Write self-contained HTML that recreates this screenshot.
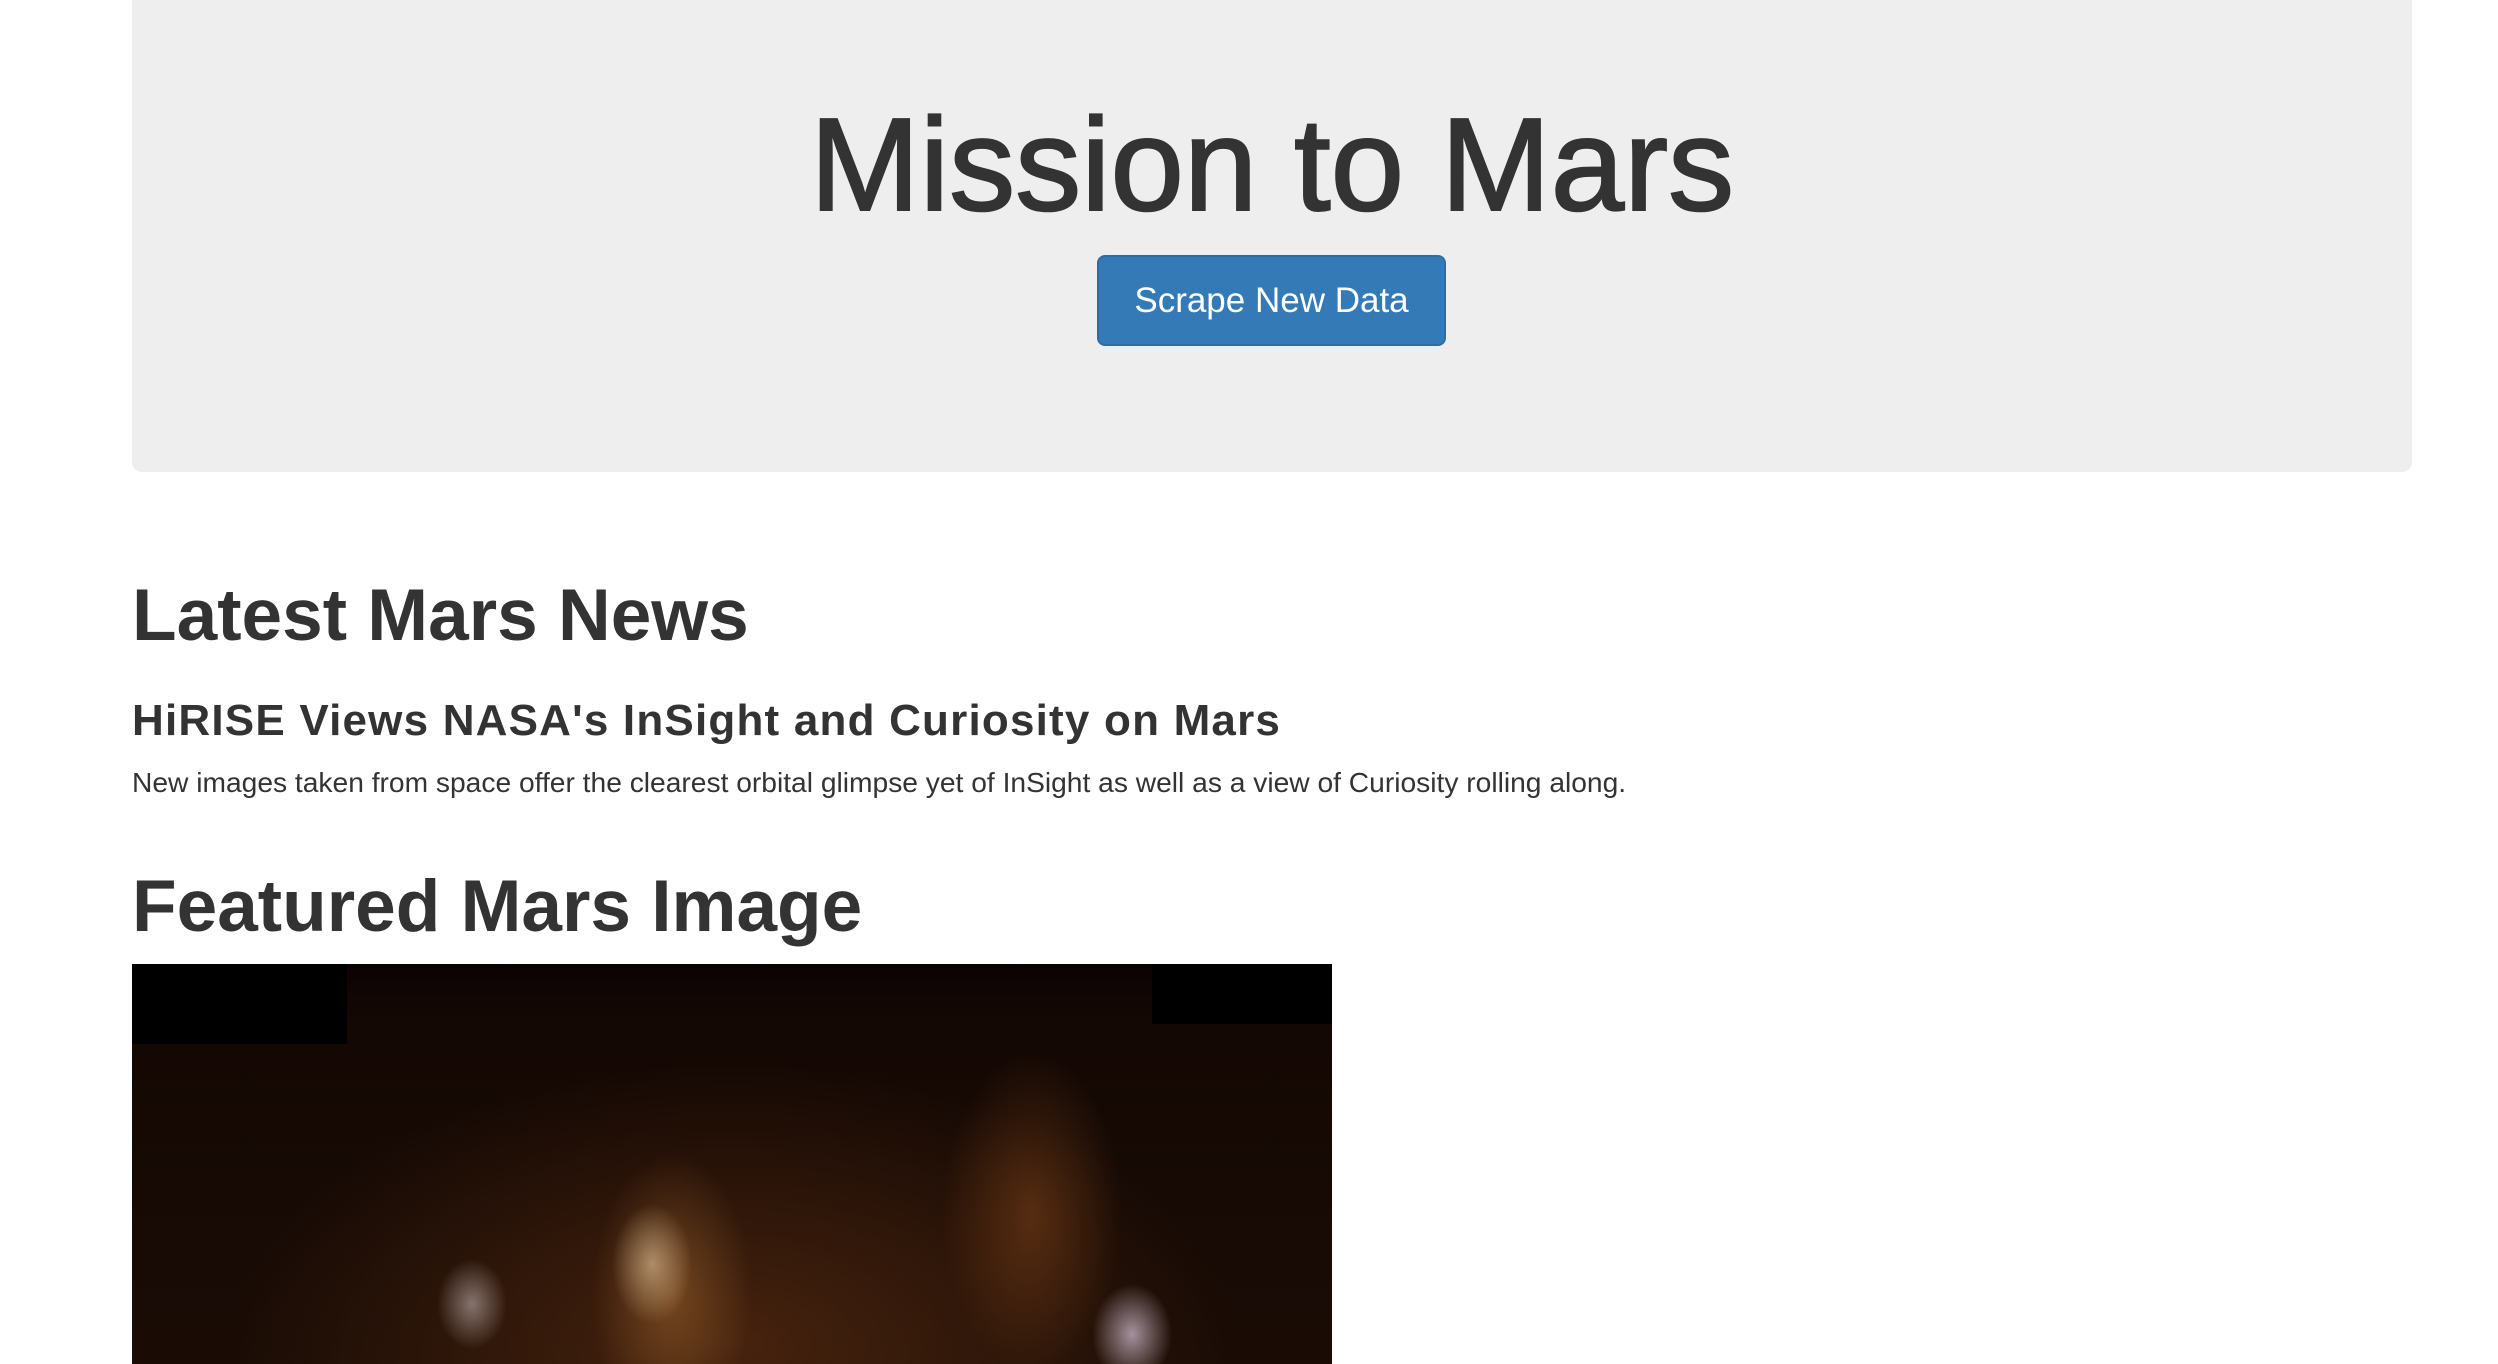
<!DOCTYPE html>
<html><head><meta charset="utf-8"><style>
html,body{margin:0;padding:0;background:#fff;width:2498px;height:1358px;overflow:hidden;font-family:"Liberation Sans",Arial,sans-serif;color:#333}
.jumbo{position:absolute;left:132px;top:-10px;width:2280px;height:482px;background:#eee;border-radius:10px}
h1{position:absolute;left:132px;width:2280px;top:85px;margin:0;text-align:center;font-size:132px;font-weight:normal;line-height:160px;-webkit-text-stroke:2px #333;letter-spacing:0}
.btn{position:absolute;left:1097px;top:255px;width:349px;height:91px;box-sizing:border-box;background:#337ab7;border:2px solid #2e6da4;border-radius:8px;color:#fff;font-size:35px;text-align:center;line-height:87px}
.t{position:absolute;left:132px;margin:0;white-space:nowrap}
.h2{font-size:73px;font-weight:bold;line-height:1}
.h3{font-size:44px;font-weight:bold;letter-spacing:1.2px;line-height:1}
.p{font-size:28.2px;line-height:1}
.img{position:absolute;left:132px;top:964px;width:1200px;height:400px;background:
radial-gradient(ellipse 40px 50px at 1000px 370px,rgba(220,200,220,.7),transparent),
radial-gradient(ellipse 40px 60px at 520px 300px,rgba(240,210,170,.55),transparent),
radial-gradient(ellipse 35px 45px at 340px 340px,rgba(220,210,210,.5),transparent),
radial-gradient(ellipse 80px 140px at 540px 330px,rgba(170,110,50,.5),transparent),
radial-gradient(ellipse 90px 160px at 900px 250px,rgba(150,80,30,.45),transparent),
radial-gradient(ellipse 500px 280px at 600px 380px,rgba(100,50,20,.6),transparent),
linear-gradient(#0a0303 0,#140804 60px,#1a0c05 100%)}
.img:before{content:"";position:absolute;left:0;top:0;width:215px;height:80px;background:#000}
.img:after{content:"";position:absolute;right:0;top:0;width:180px;height:60px;background:#000}
</style></head><body>
<div class="jumbo"></div>
<h1>Mission to Mars</h1>
<div class="btn">Scrape New Data</div>
<div class="t h2" style="top:579px">Latest Mars News</div>
<div class="t h3" style="top:699px">HiRISE Views NASA's InSight and Curiosity on Mars</div>
<div class="t p" style="top:768px">New images taken from space offer the clearest orbital glimpse yet of InSight as well as a view of Curiosity rolling along.</div>
<div class="t h2" style="top:870px">Featured Mars Image</div>
<div class="img"></div>
</body></html>
